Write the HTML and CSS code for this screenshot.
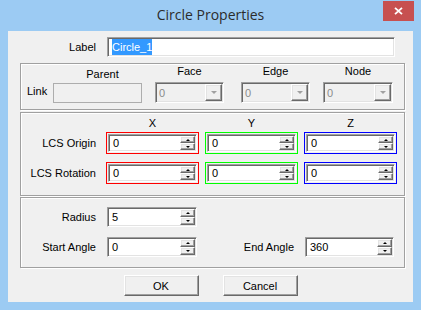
FILE: index.html
```html
<!DOCTYPE html>
<html lang="en">
<head>
    <meta charset="UTF-8">
    <title>Circle Properties</title>
    <link rel="stylesheet" href="styles.css">
</head>
<body>
    <div class="window">
        <div class="titlebar">
            <span class="title">Circle Properties</span>
            <button class="close">
                <svg width="9" height="8" viewBox="0 0 9 8"><path d="M1 0.8L8 7.2M8 0.8L1 7.2" stroke="#fff" stroke-width="1.8" fill="none"/></svg>
            </button>
        </div>
        <div class="client">
            <div class="label-row">
                <span class="lbl">Label</span>
                <div class="text-field sunken"><span class="sel">Circle_1</span></div>
            </div>

            <div class="group link-group">
                <span class="link-lbl">Link</span>
                <div class="col parent">
                    <span class="head">Parent</span>
                    <div class="parent-field"></div>
                </div>
                <div class="col face">
                    <span class="head">Face</span>
                    <div class="combo sunken"><span class="v">0</span><span class="drop raised"></span></div>
                </div>
                <div class="col edge">
                    <span class="head">Edge</span>
                    <div class="combo sunken"><span class="v">0</span><span class="drop raised"></span></div>
                </div>
                <div class="col node">
                    <span class="head">Node</span>
                    <div class="combo sunken"><span class="v">0</span><span class="drop raised"></span></div>
                </div>
            </div>

            <div class="group lcs-group">
                <div class="axes head-row">
                    <span></span><span>X</span><span>Y</span><span>Z</span>
                </div>
                <div class="axes first">
                    <span class="lbl">LCS Origin</span>
                    <div class="axis x"><div class="spin sm sunken"><span class="v">0</span><span class="arrows"><span class="up raised"></span><span class="down raised"></span></span></div></div>
                    <div class="axis y"><div class="spin sm sunken"><span class="v">0</span><span class="arrows"><span class="up raised"></span><span class="down raised"></span></span></div></div>
                    <div class="axis z"><div class="spin sm sunken"><span class="v">0</span><span class="arrows"><span class="up raised"></span><span class="down raised"></span></span></div></div>
                </div>
                <div class="axes">
                    <span class="lbl">LCS Rotation</span>
                    <div class="axis x"><div class="spin sm sunken"><span class="v">0</span><span class="arrows"><span class="up raised"></span><span class="down raised"></span></span></div></div>
                    <div class="axis y"><div class="spin sm sunken"><span class="v">0</span><span class="arrows"><span class="up raised"></span><span class="down raised"></span></span></div></div>
                    <div class="axis z"><div class="spin sm sunken"><span class="v">0</span><span class="arrows"><span class="up raised"></span><span class="down raised"></span></span></div></div>
                </div>
            </div>

            <div class="group circle-group">
                <div class="crow">
                    <span class="lbl">Radius</span>
                    <div class="spin w90 sunken"><span class="v">5</span><span class="arrows"><span class="up raised"></span><span class="down raised"></span></span></div>
                </div>
                <div class="crow second">
                    <span class="lbl">Start Angle</span>
                    <div class="spin w90 sunken"><span class="v">0</span><span class="arrows"><span class="up raised"></span><span class="down raised"></span></span></div>
                    <span class="end-lbl">End Angle</span>
                    <div class="spin w89 sunken"><span class="v">360</span><span class="arrows"><span class="up raised"></span><span class="down raised"></span></span></div>
                </div>
            </div>

            <div class="buttons">
                <button class="btn raised">OK</button>
                <button class="btn raised">Cancel</button>
            </div>
        </div>
    </div>
</body>
</html>
```

FILE: styles.css
```css
* {
    box-sizing: border-box;
}
body {
    margin: 0;
    font-family: "Liberation Sans", Arial, sans-serif;
    font-size: 11px;
    color: #000;
}
.window {
    width: 421px;
    height: 310px;
    background: #9ccbf3;
    padding: 0 8px 8px 8px;
    display: flex;
    flex-direction: column;
    overflow: hidden;
}
.titlebar {
    height: 31px;
    margin: 0 -8px;
    display: grid;
    grid-template-columns: 1fr auto 1fr;
}
.title {
    grid-column: 2;
    font-family: "Open Sans", "Noto Sans", sans-serif;
    font-size: 14px;
    line-height: 30px;
    color: #2b2b2b;
}
.close {
    grid-column: 3;
    justify-self: end;
    align-self: start;
    margin: 1px 7px 0 0;
    width: 31px;
    height: 20px;
    padding: 0;
    border: 0;
    background: #c75050;
    display: flex;
    align-items: center;
    justify-content: center;
}
.client {
    flex: 1;
    background: #f0f0f0;
    padding-top: 6px;
    display: flex;
    flex-direction: column;
}

/* 3d borders */
.sunken {
    border: 1px solid;
    border-color: #a0a0a0 #fff #fff #a0a0a0;
    box-shadow: inset 1px 1px #696969, inset -1px -1px #e3e3e3;
    padding: 1px;
}
.raised {
    border: 1px solid;
    border-color: #fff #696969 #696969 #fff;
    box-shadow: inset -1px -1px #a0a0a0, inset 1px 1px #e3e3e3;
    background: #f0f0f0;
}

.label-row {
    display: flex;
    align-items: center;
    height: 20px;
}
.label-row .lbl {
    width: 88px;
    text-align: right;
    margin-right: 11px;
}
.text-field {
    width: 288px;
    height: 20px;
    background: #fff;
    padding-left: 4px;
    display: flex;
}
.sel {
    background: #3399ff;
    color: #fff;
    line-height: 16px;
    height: 16px;
}

.group {
    width: 385px;
    margin-left: 12px;
    border: 1px solid #a0a0a0;
    box-shadow: inset 1px 1px #fff, 1px 1px #fff;
}

/* link group */
.link-group {
    margin-top: 6px;
    height: 47px;
    display: flex;
    align-items: flex-start;
    padding: 1px 0 0 6px;
}
.link-lbl {
    width: 26px;
    margin-top: 20px;
    line-height: 13px;
}
.col {
    display: flex;
    flex-direction: column;
    align-items: center;
}
.head {
    line-height: 13px;
}
.col.parent {
    width: 89px;
}
.col.parent .head {
    padding: 3px 0 0 10px;
}
.parent-field {
    width: 89px;
    height: 20px;
    margin-top: 2px;
    border: 1px solid #adadad;
    background: #f0f0f0;
}
.col.face {
    width: 69px;
    margin-left: 13px;
}
.col.edge {
    width: 69px;
    margin-left: 17px;
}
.col.node {
    width: 70px;
    margin-left: 13px;
}
.combo {
    width: 100%;
    height: 21px;
    margin-top: 4px;
    background: #f0f0f0;
    display: flex;
    align-items: center;
}
.combo .v {
    flex: 1;
    padding-left: 2px;
    color: #8b8b8b;
}
.drop {
    width: 17px;
    height: 17px;
    display: flex;
    align-items: center;
    justify-content: center;
}
.drop::after {
    content: "";
    border-left: 3px solid transparent;
    border-right: 3px solid transparent;
    border-top: 3px solid #a0a0a0;
}

/* lcs group */
.lcs-group {
    margin-top: 2px;
    height: 84px;
    padding-top: 4px;
}
.axes {
    display: grid;
    grid-template-columns: 79px 93px 93px 93px;
    column-gap: 6px;
}
.axes.head-row {
    line-height: 13px;
    text-align: center;
    margin-bottom: 2px;
}
.axes.first {
    margin-bottom: 8px;
}
.axes .lbl {
    align-self: center;
    text-align: right;
    padding-right: 4px;
}
.axis {
    border: 1px solid;
    padding: 1px;
}
.axis.x {
    border-color: #ff0000;
}
.axis.y {
    border-color: #00ff00;
}
.axis.z {
    border-color: #0000ff;
}

/* spin boxes */
.spin {
    width: 100%;
    height: 20px;
    background: #fff;
    display: flex;
    align-items: center;
}
.spin.sm {
    height: 18px;
}
.spin.w90 {
    width: 90px;
}
.spin.w89 {
    width: 89px;
}
.spin .v {
    flex: 1;
    padding-left: 3px;
}
.arrows {
    align-self: stretch;
    width: 15px;
    display: flex;
    flex-direction: column;
}
.arrows span {
    flex: 1;
    display: flex;
    align-items: center;
    justify-content: center;
}
.arrows .up::after {
    content: "";
    border-left: 2px solid transparent;
    border-right: 2px solid transparent;
    border-bottom: 2px solid #000;
}
.arrows .down::after {
    content: "";
    border-left: 2px solid transparent;
    border-right: 2px solid transparent;
    border-top: 2px solid #000;
}

/* circle group */
.circle-group {
    margin-top: 1px;
    height: 71px;
    padding-top: 9px;
}
.crow {
    display: flex;
    align-items: center;
}
.crow.second {
    margin-top: 10px;
}
.crow .lbl {
    width: 79px;
    text-align: right;
    padding-right: 4px;
    margin-right: 7px;
}
.end-lbl {
    width: 97px;
    text-align: right;
    margin-right: 11px;
}

.buttons {
    display: flex;
    justify-content: center;
    gap: 24px;
    margin-top: 7px;
}
.btn {
    width: 75px;
    height: 21px;
    padding: 0;
    font: inherit;
    color: #000;
}
```
